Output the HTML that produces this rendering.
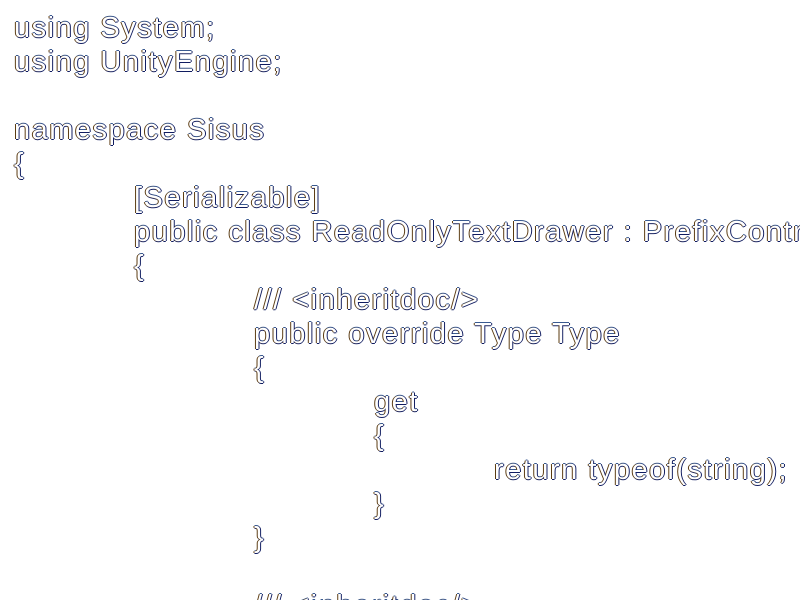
<!DOCTYPE html>
<html><head><meta charset="utf-8"><style>
html,body{margin:0;padding:0;background:#fff;width:800px;height:600px;overflow:hidden}
pre{margin:0;padding:11px 0 0 14px;width:786px;height:589px;overflow:hidden;font-family:"Liberation Sans",sans-serif;font-size:29px;line-height:34px;letter-spacing:1.5px;color:#fff;
text-shadow:1px 0 0 #101c60,-1px 0 0 #5a3a10,0 1px 0 #101c60,0 -1px 0 #3a5a90;white-space:pre}
.t{display:inline-block;width:120px}
</style></head><body><pre>using System;
using UnityEngine;

namespace Sisus
{
<span class="t"></span>[Serializable]
<span class="t"></span>public class ReadOnlyTextDrawer : PrefixControlDrawer
<span class="t"></span>{
<span class="t"></span><span class="t"></span>/// &lt;inheritdoc/&gt;
<span class="t"></span><span class="t"></span>public override Type Type
<span class="t"></span><span class="t"></span>{
<span class="t"></span><span class="t"></span><span class="t"></span>get
<span class="t"></span><span class="t"></span><span class="t"></span>{
<span class="t"></span><span class="t"></span><span class="t"></span><span class="t"></span>return typeof(string);
<span class="t"></span><span class="t"></span><span class="t"></span>}
<span class="t"></span><span class="t"></span>}

<span class="t"></span><span class="t"></span>/// &lt;inheritdoc/&gt;
</pre></body></html>
